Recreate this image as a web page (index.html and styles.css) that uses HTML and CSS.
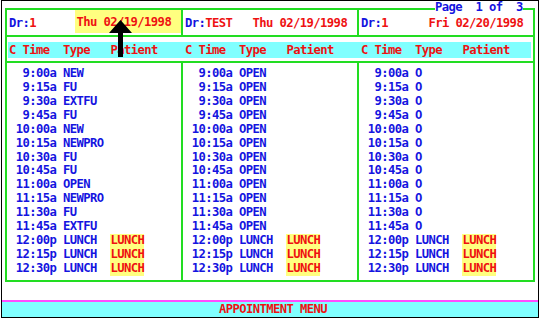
FILE: index.html
```html
<!DOCTYPE html>
<html lang="en">
<head>
  <meta charset="UTF-8" />
  <title>Appointment Menu</title>
  <link rel="stylesheet" href="styles.css">
</head>
<body>
  <div class="screen">
    <div class="board">
      <div class="page">Page  1 of  3</div>

      <div class="heads">
        <div class="pane head"><span class="dr">Dr:<em>1</em></span><span class="date picked">Thu 02/19/1998</span></div>
        <div class="pane head"><span class="dr">Dr:<em>TEST</em></span><span class="date">Thu 02/19/1998</span></div>
        <div class="pane head"><span class="dr">Dr:<em>1</em></span><span class="date">Fri 02/20/1998</span></div>
      </div>

      <div class="band">
        <div class="titles">
          <div class="hcell"><span class="hc">C Time</span><span class="type">Type</span><span>Patient</span></div>
          <div class="hcell"><span class="hc">C Time</span><span class="type">Type</span><span>Patient</span></div>
          <div class="hcell"><span class="hc">C Time</span><span class="type">Type</span><span>Patient</span></div>
        </div>
      </div>

      <div class="days">
        <div class="pane day">
          <div class="slot"><span class="time">9:00a</span><span class="type">NEW</span></div>
          <div class="slot"><span class="time">9:15a</span><span class="type">FU</span></div>
          <div class="slot"><span class="time">9:30a</span><span class="type">EXTFU</span></div>
          <div class="slot"><span class="time">9:45a</span><span class="type">FU</span></div>
          <div class="slot"><span class="time">10:00a</span><span class="type">NEW</span></div>
          <div class="slot"><span class="time">10:15a</span><span class="type">NEWPRO</span></div>
          <div class="slot"><span class="time">10:30a</span><span class="type">FU</span></div>
          <div class="slot"><span class="time">10:45a</span><span class="type">FU</span></div>
          <div class="slot"><span class="time">11:00a</span><span class="type">OPEN</span></div>
          <div class="slot"><span class="time">11:15a</span><span class="type">NEWPRO</span></div>
          <div class="slot"><span class="time">11:30a</span><span class="type">FU</span></div>
          <div class="slot"><span class="time">11:45a</span><span class="type">EXTFU</span></div>
          <div class="slot"><span class="time">12:00p</span><span class="type">LUNCH</span><span class="who">LUNCH</span></div>
          <div class="slot"><span class="time">12:15p</span><span class="type">LUNCH</span><span class="who">LUNCH</span></div>
          <div class="slot"><span class="time">12:30p</span><span class="type">LUNCH</span><span class="who">LUNCH</span></div>
        </div>
        <div class="pane day">
          <div class="slot"><span class="time">9:00a</span><span class="type">OPEN</span></div>
          <div class="slot"><span class="time">9:15a</span><span class="type">OPEN</span></div>
          <div class="slot"><span class="time">9:30a</span><span class="type">OPEN</span></div>
          <div class="slot"><span class="time">9:45a</span><span class="type">OPEN</span></div>
          <div class="slot"><span class="time">10:00a</span><span class="type">OPEN</span></div>
          <div class="slot"><span class="time">10:15a</span><span class="type">OPEN</span></div>
          <div class="slot"><span class="time">10:30a</span><span class="type">OPEN</span></div>
          <div class="slot"><span class="time">10:45a</span><span class="type">OPEN</span></div>
          <div class="slot"><span class="time">11:00a</span><span class="type">OPEN</span></div>
          <div class="slot"><span class="time">11:15a</span><span class="type">OPEN</span></div>
          <div class="slot"><span class="time">11:30a</span><span class="type">OPEN</span></div>
          <div class="slot"><span class="time">11:45a</span><span class="type">OPEN</span></div>
          <div class="slot"><span class="time">12:00p</span><span class="type">LUNCH</span><span class="who">LUNCH</span></div>
          <div class="slot"><span class="time">12:15p</span><span class="type">LUNCH</span><span class="who">LUNCH</span></div>
          <div class="slot"><span class="time">12:30p</span><span class="type">LUNCH</span><span class="who">LUNCH</span></div>
        </div>
        <div class="pane day">
          <div class="slot"><span class="time">9:00a</span><span class="type">O</span></div>
          <div class="slot"><span class="time">9:15a</span><span class="type">O</span></div>
          <div class="slot"><span class="time">9:30a</span><span class="type">O</span></div>
          <div class="slot"><span class="time">9:45a</span><span class="type">O</span></div>
          <div class="slot"><span class="time">10:00a</span><span class="type">O</span></div>
          <div class="slot"><span class="time">10:15a</span><span class="type">O</span></div>
          <div class="slot"><span class="time">10:30a</span><span class="type">O</span></div>
          <div class="slot"><span class="time">10:45a</span><span class="type">O</span></div>
          <div class="slot"><span class="time">11:00a</span><span class="type">O</span></div>
          <div class="slot"><span class="time">11:15a</span><span class="type">O</span></div>
          <div class="slot"><span class="time">11:30a</span><span class="type">O</span></div>
          <div class="slot"><span class="time">11:45a</span><span class="type">O</span></div>
          <div class="slot"><span class="time">12:00p</span><span class="type">LUNCH</span><span class="who">LUNCH</span></div>
          <div class="slot"><span class="time">12:15p</span><span class="type">LUNCH</span><span class="who">LUNCH</span></div>
          <div class="slot"><span class="time">12:30p</span><span class="type">LUNCH</span><span class="who">LUNCH</span></div>
        </div>
      </div>
    </div>

    <div class="status">APPOINTMENT MENU</div>

    <!-- mouse pointer -->
    <svg class="cursor" width="24" height="38" viewBox="0 0 24 38">
      <path d="M11.5 0 L23 13 L14 13 L14 37 L9 37 L9 13 L0 13 Z" fill="#000" />
    </svg>
  </div>
</body>
</html>
```

FILE: styles.css
```css
/* one text-mode cell is 6.76px wide */
:root {
  --c: 6.76px;
}

body {
  margin: 0;
  background: #fff;
  font-family: "DejaVu Sans Mono", "Liberation Mono", monospace;
  font-size: 12.2px;
  letter-spacing: -0.585px;
  font-weight: bold;
  color: #1414e0;
}

.screen {
  position: relative;
  box-sizing: border-box;
  width: 538px;
  height: 318px;
  margin-left: 1px;
  border: 1px solid #000;
  display: flex;
  flex-direction: column;
}

.board {
  position: relative;
  margin: 7px 3px 0;
  border: 2px solid #22dd22;
}

.page {
  position: absolute;
  top: -9px;
  left: 428px;
  line-height: 12px;
  white-space: pre;
  background: #fff;
}

.heads,
.days {
  display: grid;
  grid-template-columns: 174px 176px 176px;
}

.pane {
  padding-left: 2px;
}

.pane + .pane {
  border-left: 2px solid #22dd22;
}

.head {
  height: 25px;
  display: flex;
  align-items: center;
}

.dr {
  width: calc(10 * var(--c));
}

.dr em,
.date {
  font-style: normal;
  color: #ee1111;
}

.date.picked {
  align-self: stretch;
  flex: 1;
  margin: 0 0 2px -2px;
  padding-left: 2px;
  display: flex;
  align-items: center;
  background: #ffff80;
}

.band {
  height: 24px;
  border-top: 2px solid #22dd22;
  border-bottom: 2px solid #22dd22;
}

.titles {
  display: grid;
  grid-template-columns: 176px 176px 1fr;
  height: 16px;
  margin: 5px 2px 0 1px;
  padding-left: 1px;
  background: #80ffff;
  color: #ee1111;
  line-height: 16px;
}

.hcell {
  display: flex;
}

.hc {
  width: calc(8 * var(--c));
}

.day {
  padding-top: 4px;
  height: 213px;
}

.slot {
  display: flex;
  height: 13.93px;
  line-height: 13.93px;
}

.time {
  width: calc(7 * var(--c));
  margin-right: var(--c);
  text-align: right;
}

.type {
  width: calc(7 * var(--c));
}

.who {
  width: calc(5 * var(--c));
  background: #ffff80;
  color: #ee1111;
}

.status {
  margin-top: auto;
  height: 15px;
  border-top: 2px solid #ff4cff;
  background: #80ffff;
  color: #ee1111;
  line-height: 15px;
  text-align: center;
  padding-left: 6px;
}

.cursor {
  position: absolute;
  left: 107px;
  top: 19px;
}
```
